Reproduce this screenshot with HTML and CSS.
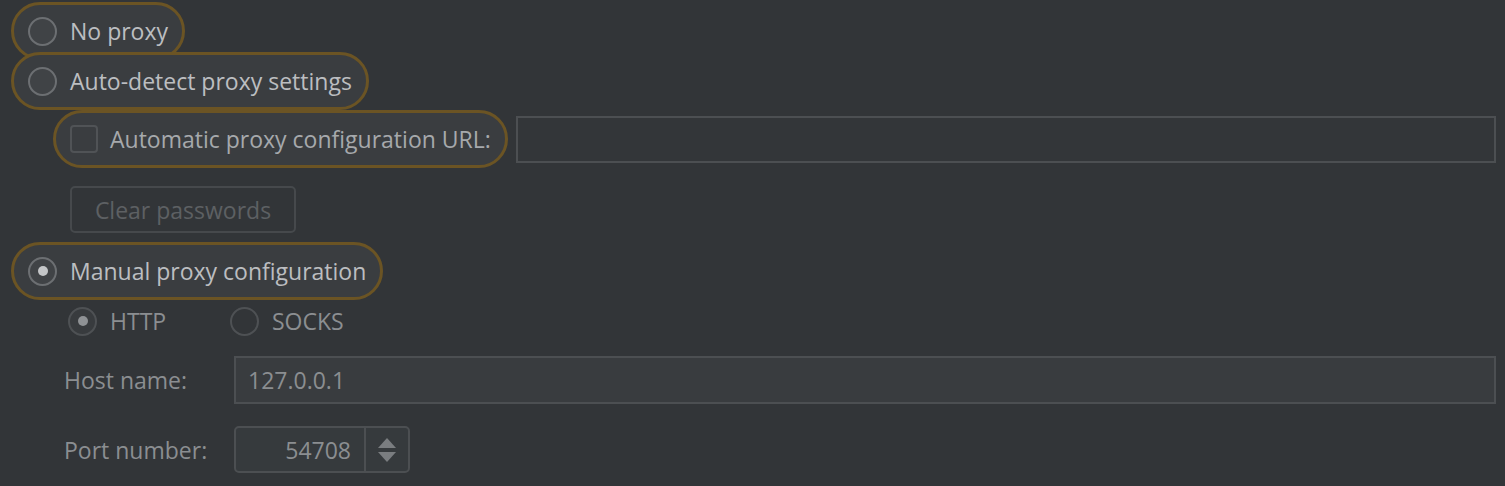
FILE: index.html
```html
<!DOCTYPE html>
<html>
<head>
<meta charset="utf-8">
<link rel="stylesheet" href="styles.css">
</head>
<body>
<div class="panel">
  <div class="row r1">
    <label class="pill">
      <span class="radio"></span>
      <span class="txt">No proxy</span>
    </label>
  </div>
  <div class="row r2">
    <label class="pill">
      <span class="radio"></span>
      <span class="txt">Auto-detect proxy settings</span>
    </label>
  </div>
  <div class="row r3">
    <label class="pill pill-indent">
      <span class="check"></span>
      <span class="txt dim">Automatic proxy configuration URL:</span>
    </label>
    <div class="field url-field"></div>
  </div>
  <div class="row r4">
    <button class="btn" disabled>Clear passwords</button>
  </div>
  <div class="row r5">
    <label class="pill">
      <span class="radio on"></span>
      <span class="txt">Manual proxy configuration</span>
    </label>
  </div>
  <div class="row r6">
    <span class="opt">
      <span class="radio small-dis on"></span>
      <span class="txt gray">HTTP</span>
    </span>
    <span class="opt">
      <span class="radio small-dis socks"></span>
      <span class="txt gray">SOCKS</span>
    </span>
  </div>
  <div class="row r7">
    <span class="lbl">Host name:</span>
    <div class="field host-field">127.0.0.1</div>
  </div>
  <div class="row r8">
    <span class="lbl">Port number:</span>
    <div class="spinner">
      <span class="spin-val">54708</span>
      <span class="spin-btn">
        <svg width="20" height="26" viewBox="0 0 20 26">
          <path d="M10 1 L19 11 L1 11 Z" fill="#7a7d80"/>
          <path d="M1 15 L19 15 L10 25 Z" fill="#7a7d80"/>
        </svg>
      </span>
    </div>
  </div>
</div>
</body>
</html>
```
FILE: styles.css
```css
html, body {
  margin: 0;
  padding: 0;
  background: #323538;
  height: 100%;
}
body {
  font-family: "Open Sans", "Noto Sans", sans-serif;
  font-size: 23px;
  color: #bcbec0;
  overflow: hidden;
}
.panel {
  display: flex;
  flex-direction: column;
  padding: 2px 9px 0 11px;
}
.row {
  display: flex;
  align-items: center;
}
.pill {
  display: flex;
  align-items: center;
  height: 52px;
  padding: 0 14px 0 14px;
  border: 3px solid #6b5424;
  border-radius: 30px;
  background: #3a3d40;
}
.r1 { height: 58px; }
.r2 { height: 58px; margin-top: -8px; }
.r3 { height: 58px; padding-left: 42px; }
.r4 { height: 47px; margin-top: 18px; padding-left: 59px; }
.r5 { height: 58px; margin-top: 9px; }
.r6 { height: 28px; margin-top: 7px; padding-left: 57px; }
.r7 { height: 48px; margin-top: 21px; padding-left: 53px; }
.r8 { height: 47px; margin-top: 22px; padding-left: 53px; }

.opt {
  display: flex;
  align-items: center;
  width: 162px;
}
.radio {
  box-sizing: border-box;
  width: 29px;
  height: 29px;
  border-radius: 50%;
  border: 2px solid #6c6f72;
  background: #404346;
  flex: none;
  display: flex;
  align-items: center;
  justify-content: center;
}
.radio.on::after {
  content: "";
  width: 10px;
  height: 10px;
  border-radius: 50%;
  background: #c4c6c8;
}
.radio.small-dis {
  border-color: #4e5154;
  background: #383b3e;
}
.radio.small-dis.on::after {
  background: #8f9295;
}
.radio.socks {
  background: #323538;
}
.txt {
  margin-left: 13px;
  white-space: nowrap;
}
.txt.dim { color: #a6a9ac; margin-left: 12px; }
.txt.gray { color: #8b8e91; }

.check {
  box-sizing: border-box;
  width: 28px;
  height: 28px;
  border: 2px solid #505356;
  border-radius: 4px;
  background: #3a3d40;
  flex: none;
}
.field {
  box-sizing: border-box;
  border: 2px solid #4c4f52;
  height: 47px;
}
.url-field {
  flex: 1;
  margin-left: 8px;
  background: #333639;
}
.host-field {
  flex: 1;
  height: 48px;
  background: #393c3f;
  color: #8b8e91;
  display: flex;
  align-items: center;
  padding-left: 12px;
}
.lbl {
  width: 170px;
  color: #8b8e91;
  flex: none;
}
.btn {
  box-sizing: border-box;
  height: 47px;
  width: 226px;
  background: #323538;
  border: 2px solid #46494c;
  border-radius: 5px;
  font: inherit;
  color: #5d6063;
  padding: 0;
}
.spinner {
  box-sizing: border-box;
  display: flex;
  height: 47px;
  width: 176px;
  border: 2px solid #4c4f52;
  border-radius: 5px;
  background: #363a3d;
}
.spin-val {
  flex: 1;
  text-align: right;
  padding-right: 13px;
  color: #8b8e91;
  align-self: center;
}
.spin-btn {
  width: 42px;
  border-left: 2px solid #4c4f52;
  display: flex;
  align-items: center;
  justify-content: center;
}
```
